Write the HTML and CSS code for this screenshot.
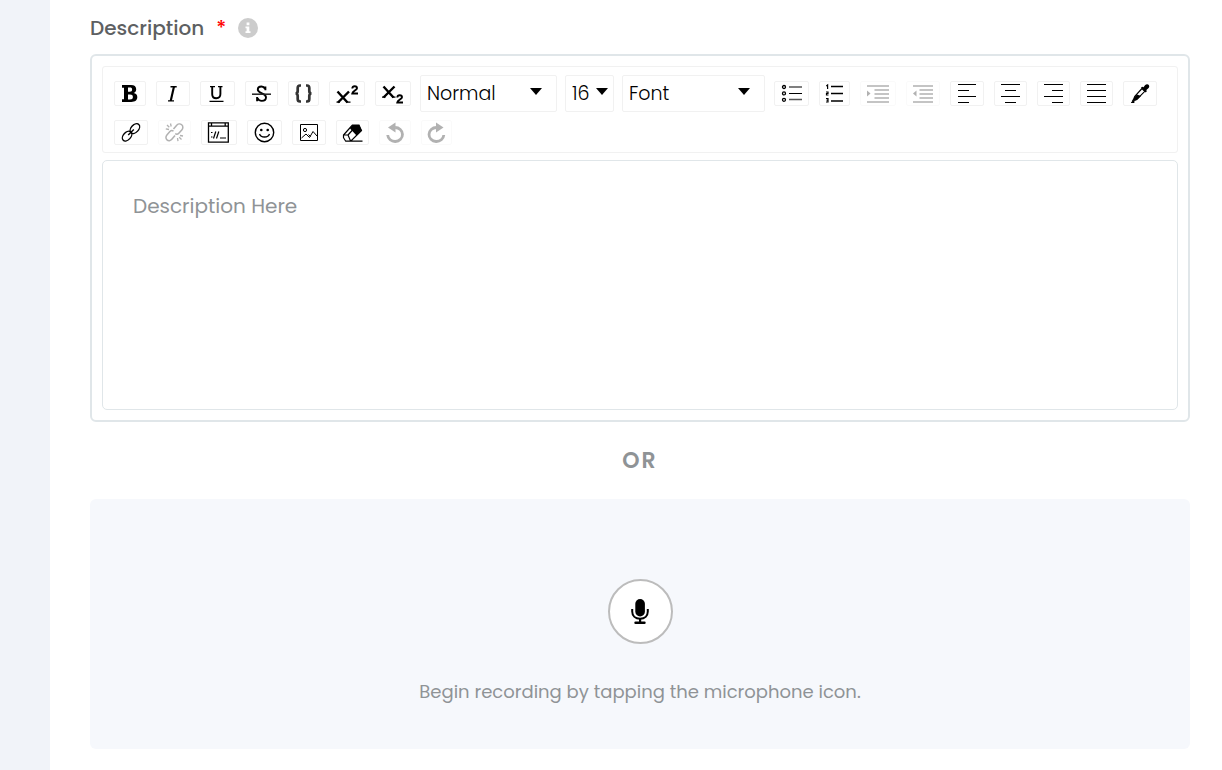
FILE: index.html
```html
<!DOCTYPE html>
<html lang="en">
<head>
<meta charset="utf-8">
<meta name="viewport" content="width=device-width, initial-scale=1">
<title>Description</title>
<link rel="stylesheet" href="styles.css">
</head>
<body>
<main class="page">
  <div class="field-head">
    <label class="field-label" for="description">Description</label>
    <span class="required">*</span>
    <svg class="info" width="20" height="20" viewBox="0 0 20 20"><circle cx="10" cy="10" r="10" fill="#ccc"/><path d="M8.600 4.600h2.800v2.600H8.600zM7.500 8.400h3.800v4.800h1.200v1.900h-5v-1.900h1.100v-2.900H7.500z" fill="#fff"/></svg>
  </div>

  <section class="editor">
    <div class="toolbar">
      <button class="tool" type="button" aria-label="Bold"><svg width="30" height="23"><path fill-rule="evenodd" d="M7 3h9c3.500 0 5.200 1.600 5.200 4.200 0 2-1 3.200-2.600 3.700 2.300.4 3.700 1.800 3.700 4.200 0 3.200-2.200 4.900-6 4.900H7v-2.700h2V5.700H7zM13 5.600v4.200h1.800c1.600 0 2.300-.8 2.300-2.200s-.7-2-2.300-2zM13 12.400v5h2c1.900 0 2.900-.8 2.900-2.500s-1-2.500-2.900-2.500z"/></svg></button>
      <button class="tool" type="button" aria-label="Italic"><svg width="32" height="23"><path d="M13.500 4.700h6.200M11 18.900h6" fill="none" stroke="#000" stroke-width="1.400"/><path d="M15.900 4.500h2.200l-3.300 14.500h-2.200z"/></svg></button>
      <button class="tool" type="button" aria-label="Underline"><svg width="33" height="23"><path d="M9 4.700h5M17 4.700h4.500M8.500 19.400h14" fill="none" stroke="#000" stroke-width="1.300"/><path d="M11.200 4.700v7.500c0 2.700 1.400 4 4 4s4.200-1.400 4.200-4.200V4.700" fill="none" stroke="#000" stroke-width="1.900"/></svg></button>
      <button class="tool" type="button" aria-label="Strikethrough"><svg width="31" height="23"><path d="M19.400 8.200V4.600M19 6.800c-.8-1.700-1.900-2.300-3.500-2.300-2.300 0-3.700 1.200-3.700 3.100 0 2.100 1.900 2.900 4.200 3.700 2.500.9 4 1.800 4 4 0 2.100-1.700 3.600-4.200 3.600-2 0-3.500-.9-4.300-2.900M11.100 19.200v-4.200" fill="none" stroke="#000" stroke-width="1.900"/><path d="M6 12.200h19" stroke="#222" stroke-width="1.500"/></svg></button>
      <button class="tool" type="button" aria-label="Monospace"><svg width="29" height="23"><path d="M12 3.500H11c-1.600 0-2.300.7-2.300 2.500v3c0 1.600-.6 2.500-2.200 2.500 1.600 0 2.200.9 2.200 2.500v3c0 1.800.7 2.500 2.300 2.500h1M17 3.500h1c1.600 0 2.300.7 2.300 2.500v3c0 1.600.6 2.500 2.200 2.500-1.600 0-2.200.9-2.200 2.500v3c0 1.800-.7 2.500-2.300 2.500h-1" fill="none" stroke="#333" stroke-width="2.700"/></svg></button>
      <button class="tool" type="button" aria-label="Superscript"><svg width="34" height="23"><path d="M7.500 9.500l10 11M19 9.500L8 20.500" fill="none" stroke="#000" stroke-width="2.400"/><path d="M6.500 20.200h3.500M16.500 20.200h4" stroke="#000" stroke-width="1.200"/><path d="M22.300 6.500c.1-1.500 1-2.300 2.400-2.300s2.300.8 2.300 2c0 1.800-4.300 3-4.700 5.300h5.700" fill="none" stroke="#000" stroke-width="1.900"/></svg></button>
      <button class="tool" type="button" aria-label="Subscript"><svg width="34" height="23"><path d="M7.500 4.500l10 11M18.500 4.500L7.500 15.500" fill="none" stroke="#000" stroke-width="2.400"/><path d="M6 15.200h3.500M16 15.200h3.500" stroke="#000" stroke-width="1.200"/><path d="M21.300 15.500c.1-1.500 1-2.300 2.400-2.300s2.300.8 2.300 2c0 1.800-4.300 3-4.700 5.300h5.700" fill="none" stroke="#000" stroke-width="1.900"/></svg></button>

      <span class="picker picker-block"><select aria-label="Block type"><option>Normal</option><option>H1</option><option>Blockquote</option></select><svg class="caret" width="12" height="7"><path d="M0 0h12L6 7z"/></svg></span>
      <span class="picker picker-size"><select aria-label="Font size"><option>16</option><option>18</option><option>24</option></select><svg class="caret" width="12" height="7"><path d="M0 0h12L6 7z"/></svg></span>
      <span class="picker picker-font"><select aria-label="Font family"><option>Font</option><option>Arial</option><option>Georgia</option></select><svg class="caret" width="12" height="7"><path d="M0 0h12L6 7z"/></svg></span>

      <button class="tool" type="button" aria-label="Unordered list"><svg width="33" height="23"><g fill="none" stroke="#000" stroke-width="1.300"><circle cx="9" cy="5" r="1.500"/><circle cx="9" cy="11.400" r="1.500"/><circle cx="9" cy="17.800" r="1.500"/></g><path d="M14 5h13M14 17.500h13" stroke="#555" stroke-width="1.300"/><path d="M14 11.500h13" stroke="#000"/></svg></button>
      <button class="tool" type="button" aria-label="Ordered list"><svg width="29" height="23"><path d="M11 4.500h12M11 11.500h12M11 19h12" stroke="#000" stroke-width="1.600"/><path d="M6.300 4l1.300-1v4M6 10h2v1.500H6.500V13h2M6 16.500h2V20H6M6.500 18.200H8" fill="none" stroke="#000" stroke-width="1.200"/></svg></button>
      <button class="tool" type="button" aria-label="Indent" disabled><svg width="34" height="23"><path d="M6 4h22M13.500 8h14.500M13.500 12h14.500M13.500 16h14.500M6 20h22" stroke="#000" stroke-width="1.600"/><path d="M6 8.500l3.500 3L6 14.500z"/></svg></button>
      <button class="tool" type="button" aria-label="Outdent" disabled><svg width="32" height="23"><path d="M6 4h20M12.500 8H26M12.500 12H26M12.500 16H26M6 20h20" stroke="#000" stroke-width="1.600"/><path d="M9.500 8.500L6 11.500l3.500 3z"/></svg></button>
      <button class="tool" type="button" aria-label="Align left"><svg width="32" height="23"><path d="M7 2.500h18M7 8.500h11M7 14.500h18M7 20.500h11" stroke="#000"/></svg></button>
      <button class="tool" type="button" aria-label="Align center"><svg width="31" height="23"><path d="M6 2.500h19M10 8.500h11M6 14.500h19M10 20.500h11" stroke="#000"/></svg></button>
      <button class="tool" type="button" aria-label="Align right"><svg width="31" height="23"><path d="M6 2.500h19M14 8.500h11M6 14.500h19M14 20.500h11" stroke="#000"/></svg></button>
      <button class="tool" type="button" aria-label="Justify"><svg width="31" height="23"><path d="M6 2.500h19M6 8.500h19M6 14.500h19M6 20.500h19" stroke="#000"/></svg></button>
      <button class="tool" type="button" aria-label="Color"><svg width="32" height="23"><path d="M17 5.500l1.200-.8 1.300.5 1.500-1.900c1.200-1.500 3.100-1.300 3.800-.3.800 1.100.5 2.600-.7 3.600l-1.700 1.400.3 1.400-1 1z"/><path d="M18 6.500L11 14.200c-.8.900-.6 2-1.300 3l-.7 1.100 1.300-.1c1.300-.2 2.200-.5 3-1.300l7.500-7.600z" fill="none" stroke="#000" stroke-width="1.200"/><path d="M13 12.500l4 1.500-4 4-3.500 1 .5-3.500zM7 20.500l2-2.300 1.800 1.500-.7 1.300H7z"/></svg></button>

      <button class="tool" type="button" aria-label="Link"><svg width="32" height="23"><g fill="none" stroke="#000" stroke-width="1.400"><ellipse cx="12.100" cy="15.100" rx="5.700" ry="3.700" transform="rotate(-47 12.100 15.100)"/><ellipse cx="19.900" cy="7.600" rx="5.700" ry="3.700" transform="rotate(-47 19.900 7.600)"/><path d="M13.200 14l5.600-5.600"/></g></svg></button>
      <button class="tool" type="button" aria-label="Unlink" disabled><svg width="31" height="23"><g fill="none" stroke="#000" stroke-width="1.500"><path d="M16 14.500l-3.200 3.800c-1.300 1.600-3.400 1.800-4.800.6s-1.400-3.400-.1-4.900l3-3.400c1-1.100 2.600-1.300 3.600-.4"/><path d="M14.500 8l3-3.600c1.400-1.600 3.700-1.900 5.200-.6s1.500 3.600.1 5.200l-3 3.300c-1 1.100-2.400 1.300-3.600.4"/><path d="M11.500 2.500l.7 3M6.800 7.800l3.200.7M8 4l2.300 2.200M18.500 17l.5 3.200M20.200 16.300l2.300 2.200M21 14.500l3 .5" stroke-width="1.300"/></g></svg></button>
      <button class="tool" type="button" aria-label="Embed"><svg width="34" height="23"><path d="M6.500 1.800h19.800v19.400H6.500zM6.500 5.200h19.800M9.500 2v3M23.200 2v3" fill="none" stroke="#000" stroke-width="1.300"/><path d="M11.500 17.500l2.300-7M14.500 17.500l2.300-7M18 17h6M9 11.500h1.500M9 16h1.500" stroke="#000" stroke-width="1.200"/></svg></button>
      <button class="tool" type="button" aria-label="Emoji"><svg width="33" height="23"><circle cx="16.500" cy="11.500" r="9.200" fill="none" stroke="#000" stroke-width="1.400"/><circle cx="13.300" cy="9" r="1.300"/><circle cx="19.700" cy="9" r="1.300"/><path d="M11.500 13c1.300 4 8.700 4 10 0" fill="none" stroke="#000" stroke-width="1.300"/></svg></button>
      <button class="tool" type="button" aria-label="Image"><svg width="32" height="23"><g fill="none" stroke="#000"><path d="M7.500 3.500h17v16h-17z"/><circle cx="12" cy="9" r="1.600"/><path d="M8.500 17l4.500-4 3.500 3.500L20 10.500l4 4.500M15.500 13.500l2 2"/></g></svg></button>
      <button class="tool" type="button" aria-label="Remove formatting"><svg width="31" height="23"><path d="M15.500 4h6.500l2.500 5-5 5.500-6.500-7z"/><path d="M15.500 4L6.500 14v2.700l2.200 3.500h5L24.500 9.500 22 4zM6.500 14h4.500l2.700 6.200M11 14l4.500-5M8.500 20.200h17" fill="none" stroke="#000" stroke-width="1.200"/></svg></button>
      <button class="tool" type="button" aria-label="Undo" disabled><svg width="30" height="23"><path d="M7.700 14a7.400 7 0 1 0 7.400-7.500" fill="none" stroke="#000" stroke-width="2.800"/><path d="M15.500 1.500v10L8 6.500z"/></svg></button>
      <button class="tool" type="button" aria-label="Redo" disabled><svg width="29" height="23"><path d="M21.800 14a7.400 7 0 1 1-7.400-7.500" fill="none" stroke="#000" stroke-width="2.800"/><path d="M14 1.500v10l7.500-5z"/></svg></button>
    </div>
    <textarea class="content" id="description" placeholder="Description Here"></textarea>
  </section>

  <p class="divider">OR</p>

  <section class="recorder">
    <button class="mic" type="button" aria-label="Start recording"><svg width="18" height="26" viewBox="0 0 18 26"><rect x="4.300" y="0" width="9.600" height="17.500" rx="4.800"/><path d="M1.200 10v2.500c0 4.300 3.300 7.200 7.900 7.200s7.700-2.900 7.700-7.200V10" fill="none" stroke="#000" stroke-width="2"/><path d="M8 19.500h2.200v3h3.300a1.200 1.200 0 0 1 0 2.400h-9a1.200 1.200 0 0 1 0-2.400H8z"/></svg></button>
    <p class="hint">Begin recording by tapping the microphone icon.</p>
  </section>
</main>
</body>
</html>
```

FILE: styles.css
```css
* {
  box-sizing: border-box;
}

body {
  margin: 0;
  border-left: 50px solid #f1f3f9;
  background: #fff;
  color: #8f9396;
  font-family: Poppins, Inter, sans-serif;
  font-size: 20px;
}

.page {
  min-height: 100vh;
  padding: 13px 32px 21px 40px;
}

.field-head {
  display: flex;
  align-items: center;
  height: 30px;
  margin-bottom: 11px;
}

.field-label {
  color: #5d6062;
  font-weight: 500;
}

.required {
  margin: 0 12px;
  color: #f00;
  font-weight: 500;
}

.editor {
  padding: 10px;
  border: 2px solid #e0e6e9;
  border-radius: 6px;
}

.toolbar {
  display: flex;
  flex-wrap: wrap;
  align-items: center;
  row-gap: 8px;
  margin-bottom: 7px;
  padding: 8px 6px 7px;
  border: 1px solid #f1f1f1;
  border-radius: 3px;
}

.tool {
  display: flex;
  margin: 0 5px;
  padding: 0;
  border: 1px solid #f1f1f1;
  border-radius: 2px;
  background: #fff;
}

.tool:disabled {
  opacity: 0.3;
}

.picker {
  display: grid;
  align-items: center;
  height: 37px;
  margin: 0 4px;
  border: 1px solid #f1f1f1;
  border-radius: 2px;
}

.picker select,
.caret {
  grid-area: 1 / 1;
}

.picker select {
  width: 100%;
  height: 100%;
  padding: 0 6px;
  border: 0;
  background: transparent;
  color: #000;
  font: 300 19px Poppins, Inter, sans-serif;
  appearance: none;
}

.caret {
  justify-self: end;
  margin: 0 14px 4px 0;
  pointer-events: none;
}

.picker-block {
  width: 137px;
}

.picker-size {
  width: 49px;
}

.picker-size .caret {
  margin-right: 5px;
}

.picker-font {
  width: 143px;
}

.content {
  display: block;
  width: 100%;
  height: 250px;
  padding: 30px;
  border: 1px solid #e0e6e9;
  border-radius: 5px;
  color: #5d6062;
  font: 20px/30px Poppins, Inter, sans-serif;
  resize: none;
}

.content::placeholder {
  color: #8f9396;
}

.divider {
  margin: 24px 0;
  font-size: 22px;
  font-weight: 600;
  line-height: 29px;
  letter-spacing: 2px;
  text-align: center;
}

.recorder {
  display: flex;
  flex-direction: column;
  align-items: center;
  padding: 80px 20px 42px;
  border-radius: 6px;
  background: #f6f8fc;
}

.mic {
  display: grid;
  place-items: center;
  width: 65px;
  height: 65px;
  padding: 0;
  border: 2px solid #bcbcbc;
  border-radius: 50%;
  background: #fff;
}

.hint {
  margin: 33px 0 0;
  font-size: 18px;
  line-height: 30px;
}
```
